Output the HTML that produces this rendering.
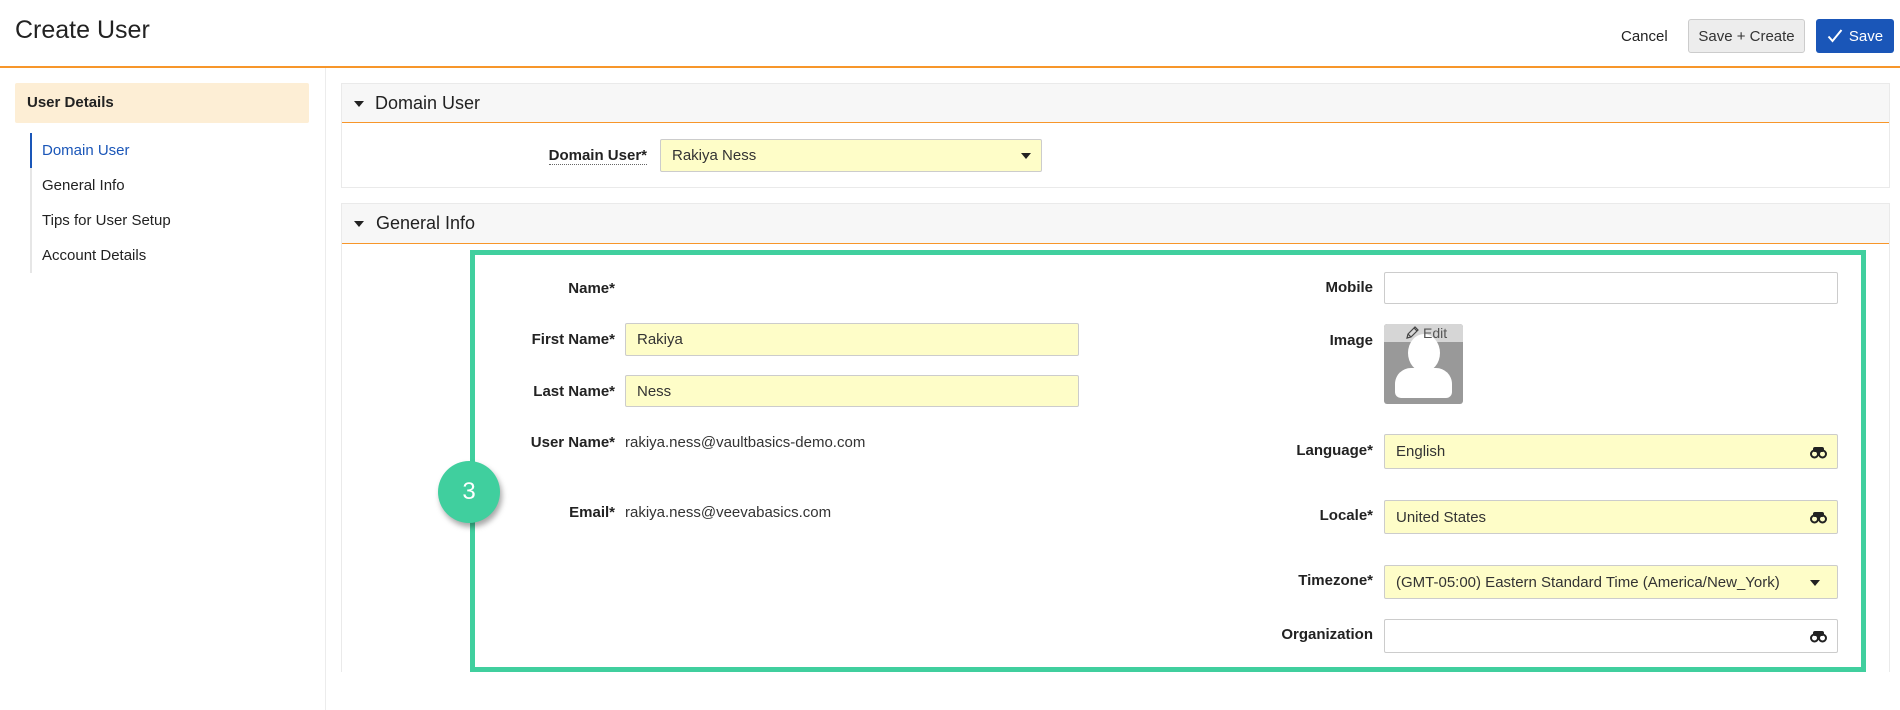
<!DOCTYPE html>
<html><head><meta charset="utf-8"><style>
*{box-sizing:border-box;margin:0;padding:0}
body{width:1900px;height:710px;overflow:hidden;background:#fff;font-family:"Liberation Sans",Arial,sans-serif;color:#333;position:relative}
.a{position:absolute}
.lbl{position:absolute;font-weight:bold;font-size:15px;text-align:right;color:#222;white-space:nowrap}
.inp{position:absolute;border:1px solid #ccc;border-radius:2px;background:#fff;font-size:15px;padding-left:11px;display:flex;align-items:center;color:#333}
.y{background:#fefdc8}
.val{position:absolute;font-size:15px;color:#333;white-space:nowrap}
.tri{width:0;height:0;border-left:5px solid transparent;border-right:5px solid transparent;border-top:6px solid #222;position:absolute}
.bino{position:absolute;right:10px;top:50%;margin-top:-6px}
</style></head><body>
<div class="a" style="left:15px;top:16px;font-size:25px;color:#222">Create User</div>
<div class="a" style="left:1621px;top:28px;font-size:15px;color:#222">Cancel</div>
<div class="a" style="left:1688px;top:19px;width:117px;height:34px;background:#ededed;border:1px solid #ccc;border-radius:3px;font-size:15px;color:#333;display:flex;align-items:center;justify-content:center">Save + Create</div>
<div class="a" style="left:1816px;top:19px;width:78px;height:34px;background:#1a56b8;border-radius:3px;font-size:15px;color:#fff;display:flex;align-items:center;justify-content:center;gap:6px"><svg width="16" height="14" viewBox="0 0 16 14"><path d="M1.5 7.5l4 4.5 9-11" stroke="#fff" stroke-width="2" fill="none"/></svg>Save</div>
<div class="a" style="left:0;top:66px;width:1900px;height:2px;background:#f7962a"></div>

<div class="a" style="left:15px;top:83px;width:294px;height:40px;background:#fdeed5;border-radius:2px;font-weight:bold;font-size:15px;color:#222;padding:11px 0 0 12px">User Details</div>
<div class="a" style="left:30px;top:133px;width:2px;height:140px;background:#e6e6e6"></div>
<div class="a" style="left:30px;top:133px;width:2px;height:35px;background:#1a56b8"></div>
<div class="a" style="left:42px;top:142px;font-size:15px;color:#1a56b8">Domain User</div>
<div class="a" style="left:42px;top:177px;font-size:15px;color:#222">General Info</div>
<div class="a" style="left:42px;top:212px;font-size:15px;color:#222">Tips for User Setup</div>
<div class="a" style="left:42px;top:247px;font-size:15px;color:#222">Account Details</div>
<div class="a" style="left:325px;top:68px;width:1px;height:642px;background:#ececec"></div>

<div class="a" style="left:341px;top:83px;width:1549px;height:105px;border:1px solid #eaeaea;background:#fff"></div>
<div class="a" style="left:342px;top:84px;width:1547px;height:39px;background:#f7f7f7;border-bottom:1px solid #f7962a"></div>
<div class="tri" style="left:354px;top:101px"></div>
<div class="a" style="left:375px;top:93px;font-size:18px;color:#222">Domain User</div>
<div class="lbl" style="right:1253px;top:147px;border-bottom:1px dotted #666;line-height:17px">Domain User*</div>
<div class="inp y" style="left:660px;top:139px;width:382px;height:33px">Rakiya Ness<div class="tri" style="left:360px;top:13px"></div></div>

<div class="a" style="left:341px;top:203px;width:1549px;height:469px;border:1px solid #eaeaea;border-bottom:none;background:#fff"></div>
<div class="a" style="left:342px;top:204px;width:1547px;height:40px;background:#f7f7f7;border-bottom:1px solid #f7962a"></div>
<div class="tri" style="left:354px;top:221px"></div>
<div class="a" style="left:376px;top:213px;font-size:18px;color:#222">General Info</div>

<div class="a" style="left:470px;top:250px;width:1396px;height:422px;border:5px solid #40cf9e"></div>
<div class="a" style="left:438px;top:461px;width:62px;height:62px;border-radius:50%;background:#40cf9e;box-shadow:2px 4px 6px rgba(0,0,0,.35);color:#fff;font-size:24px;display:flex;align-items:center;justify-content:center">3</div>

<div class="lbl" style="right:1285px;top:280px">Name*</div>
<div class="lbl" style="right:1285px;top:331px">First Name*</div>
<div class="inp y" style="left:625px;top:323px;width:454px;height:33px">Rakiya</div>
<div class="lbl" style="right:1285px;top:383px">Last Name*</div>
<div class="inp y" style="left:625px;top:375px;width:454px;height:32px">Ness</div>
<div class="lbl" style="right:1285px;top:434px">User Name*</div>
<div class="val" style="left:625px;top:434px">rakiya.ness@vaultbasics-demo.com</div>
<div class="lbl" style="right:1285px;top:504px">Email*</div>
<div class="val" style="left:625px;top:504px">rakiya.ness@veevabasics.com</div>

<div class="lbl" style="right:527px;top:279px">Mobile</div>
<div class="inp" style="left:1384px;top:272px;width:454px;height:32px"></div>
<div class="lbl" style="right:527px;top:332px">Image</div>
<div class="a" style="left:1384px;top:324px;width:79px;height:80px;background:#999;border-radius:3px;overflow:hidden">
 <div class="a" style="left:0;top:0;width:79px;height:18px;background:#d6d6d6"></div>
 <div class="a" style="left:24px;top:10px;width:32px;height:38px;border-radius:50%;background:#fff"></div>
 <div class="a" style="left:11px;top:44px;width:57px;height:30px;border-radius:16px 16px 6px 6px;background:#fff"></div>
 <svg class="a" style="left:20px;top:1px" width="16" height="16" viewBox="0 0 16 16"><path d="M3 13l1-4 7-7 3 3-7 7z M4 9l3 3 M10 3l3 3" stroke="#444" stroke-width="1.2" fill="none"/></svg>
 <div class="a" style="left:39px;top:1px;font-size:14px;color:#555">Edit</div>
</div>

<svg width="0" height="0" style="position:absolute"><defs><g id="b"><circle cx="4.5" cy="8" r="3.5" fill="none" stroke="#222" stroke-width="2"/><circle cx="12.5" cy="8" r="3.5" fill="none" stroke="#222" stroke-width="2"/><rect x="3" y="1" width="11" height="5" rx="2" fill="#222"/></g></defs></svg>
<div class="lbl" style="right:527px;top:442px">Language*</div>
<div class="inp y" style="left:1384px;top:434px;width:454px;height:35px">English<svg class="bino" width="17" height="13" viewBox="0 0 17 13"><use href="#b"/></svg></div>
<div class="lbl" style="right:527px;top:507px">Locale*</div>
<div class="inp y" style="left:1384px;top:500px;width:454px;height:34px">United States<svg class="bino" width="17" height="13" viewBox="0 0 17 13"><use href="#b"/></svg></div>
<div class="lbl" style="right:527px;top:572px">Timezone*</div>
<div class="inp y" style="left:1384px;top:565px;width:454px;height:34px">(GMT-05:00) Eastern Standard Time (America/New_York)<div class="tri" style="left:425px;top:14px"></div></div>
<div class="lbl" style="right:527px;top:626px">Organization</div>
<div class="inp" style="left:1384px;top:619px;width:454px;height:34px"><svg class="bino" width="17" height="13" viewBox="0 0 17 13"><use href="#b"/></svg></div>
</body></html>
